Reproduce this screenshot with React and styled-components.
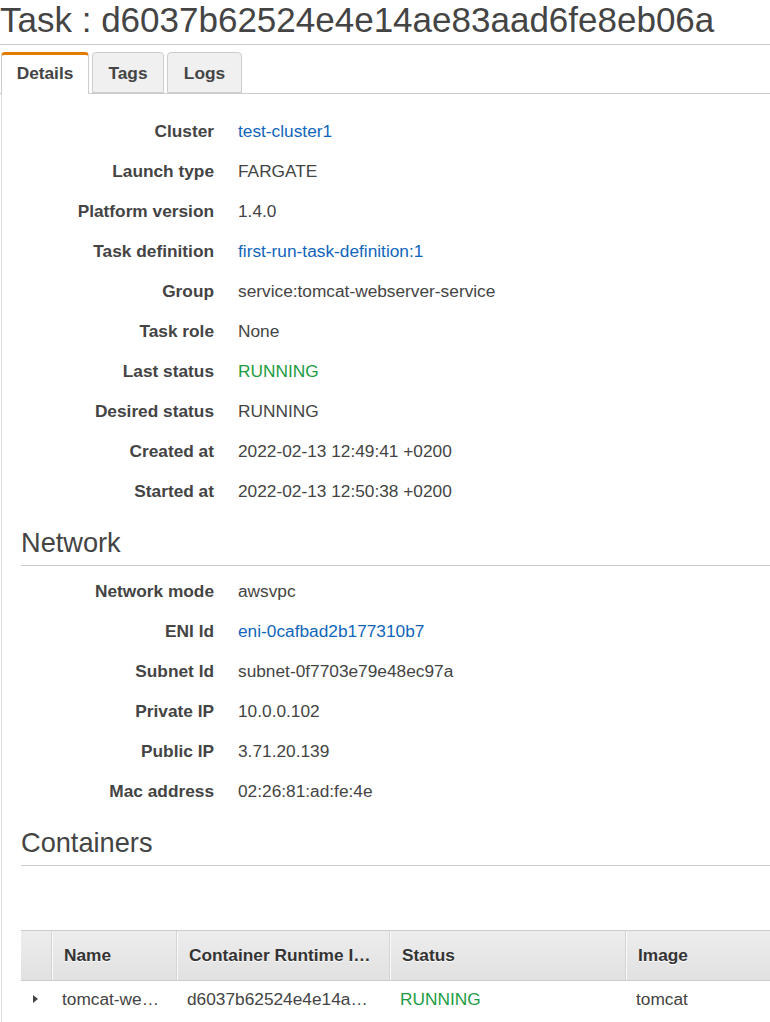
import React from "react";
import styled, { createGlobalStyle } from "styled-components";

const Global = createGlobalStyle`
  html, body {
    margin: 0;
    padding: 0;
    background: #fff;
    overflow: hidden;
  }
  body {
    font-family: "Liberation Sans", Arial, sans-serif;
    color: #444;
    width: 770px;
  }
`;

const Page = styled.div`
  width: 770px;
  overflow: hidden;
`;

const Title = styled.h1`
  margin: 0;
  font-size: 35px;
  font-weight: 400;
  line-height: 40px;
  height: 44px;
  color: #444;
  white-space: nowrap;
  border-bottom: 1px solid #ccc;
`;

const TabBar = styled.div`
  display: flex;
  align-items: flex-end;
  gap: 3px;
  margin-top: 7px;
  padding-left: 1px;
  border-bottom: 1px solid #ccc;
`;

const Tab = styled.div`
  box-sizing: border-box;
  height: ${(p) => (p.$active ? "42px" : "41px")};
  margin-bottom: ${(p) => (p.$active ? "-1px" : "0")};
  padding: ${(p) => (p.$active ? "0 0 2px" : "2px 0 0")};
  width: ${(p) => p.$w}px;
  display: flex;
  align-items: center;
  justify-content: center;
  font-size: 17.3px;
  font-weight: 700;
  color: #444;
  background: ${(p) => (p.$active ? "#fff" : "#f0f0f0")};
  border: 1px solid #ccc;
  border-bottom: ${(p) => (p.$active ? "none" : "1px solid #ccc")};
  border-top: ${(p) => (p.$active ? "3px solid #e37b00" : "1px solid #ccc")};
  border-radius: 4px 4px 0 0;
`;

const Panel = styled.div`
  margin-left: 1px;
  border-left: 1px solid #ddd;
  padding-top: 17px;
  min-height: 960px;
`;

const Rows = styled.div`
  display: flex;
  flex-direction: column;
`;

const Row = styled.div`
  display: grid;
  grid-template-columns: 212px 1fr;
  column-gap: 24px;
  height: 40px;
  align-items: center;
  font-size: 17.3px;
`;

const Label = styled.div`
  text-align: right;
  font-weight: 700;
  color: #444;
`;

const Value = styled.div`
  color: ${(p) =>
    p.$kind === "link" ? "#1166bb" : p.$kind === "ok" ? "#1d9c43" : "#444"};
`;

const SectionTitle = styled.h2`
  margin: 16px 0 5px 19px;
  padding-bottom: 6px;
  font-size: 27.2px;
  font-weight: 400;
  line-height: 32px;
  color: #444;
  border-bottom: 1px solid #ccc;
`;

const TableWrap = styled.div`
  margin: 64px 0 0 19px;
  width: 820px;
`;

const cols = "31px 125px 213px 236px 1fr";

const HeadRow = styled.div`
  display: grid;
  grid-template-columns: ${cols};
  height: 49px;
  border-top: 1px solid #ccc;
  border-bottom: 1px solid #ccc;
  background: linear-gradient(#ededed, #e1e1e1);
`;

const HeadCell = styled.div`
  display: flex;
  align-items: center;
  padding: 0 12px 1px 11px;
  font-size: 17.3px;
  font-weight: 700;
  color: #333;
  text-shadow: 0 1px 0 #fff;
  white-space: nowrap;
  overflow: hidden;
  border-left: ${(p) => (p.$first ? "none" : "1px solid #fafafa")};
  box-shadow: ${(p) => (p.$first ? "none" : "-1px 0 0 #d4d4d4")};
`;

const BodyRow = styled.div`
  display: grid;
  grid-template-columns: ${cols};
  height: 36px;
`;

const Cell = styled.div`
  display: flex;
  align-items: center;
  padding: 0 12px 0 10px;
  font-size: 17.3px;
  white-space: nowrap;
  overflow: hidden;
  color: ${(p) => (p.$ok ? "#1d9c43" : "#444")};
  justify-content: ${(p) => (p.$center ? "center" : "flex-start")};
`;

const Caret = styled.span`
  width: 0;
  height: 0;
  border-left: 5px solid #444;
  border-top: 4px solid transparent;
  border-bottom: 4px solid transparent;
`;

const details = [
  ["Cluster", "test-cluster1", "link"],
  ["Launch type", "FARGATE"],
  ["Platform version", "1.4.0"],
  ["Task definition", "first-run-task-definition:1", "link"],
  ["Group", "service:tomcat-webserver-service"],
  ["Task role", "None"],
  ["Last status", "RUNNING", "ok"],
  ["Desired status", "RUNNING"],
  ["Created at", "2022-02-13 12:49:41 +0200"],
  ["Started at", "2022-02-13 12:50:38 +0200"],
];

const network = [
  ["Network mode", "awsvpc"],
  ["ENI Id", "eni-0cafbad2b177310b7", "link"],
  ["Subnet Id", "subnet-0f7703e79e48ec97a"],
  ["Private IP", "10.0.0.102"],
  ["Public IP", "3.71.20.139"],
  ["Mac address", "02:26:81:ad:fe:4e"],
];

const KV = ({ items }) => (
  <Rows>
    {items.map(([k, v, kind]) => (
      <Row key={k}>
        <Label>{k}</Label>
        <Value $kind={kind}>{v}</Value>
      </Row>
    ))}
  </Rows>
);

export default function App() {
  return (
    <Page>
      <Global />
      <Title>Task : d6037b62524e4e14ae83aad6fe8eb06a</Title>
      <TabBar>
        <Tab $active $w={88}>Details</Tab>
        <Tab $w={72}>Tags</Tab>
        <Tab $w={75}>Logs</Tab>
      </TabBar>
      <Panel>
        <KV items={details} />
        <SectionTitle>Network</SectionTitle>
        <KV items={network} />
        <SectionTitle>Containers</SectionTitle>
        <TableWrap>
          <HeadRow>
            <HeadCell $first />
            <HeadCell>Name</HeadCell>
            <HeadCell>Container Runtime I…</HeadCell>
            <HeadCell>Status</HeadCell>
            <HeadCell>Image</HeadCell>
          </HeadRow>
          <BodyRow>
            <Cell $center>
              <Caret />
            </Cell>
            <Cell>tomcat-we…</Cell>
            <Cell>d6037b62524e4e14a…</Cell>
            <Cell $ok>RUNNING</Cell>
            <Cell>tomcat</Cell>
          </BodyRow>
        </TableWrap>
      </Panel>
    </Page>
  );
}
